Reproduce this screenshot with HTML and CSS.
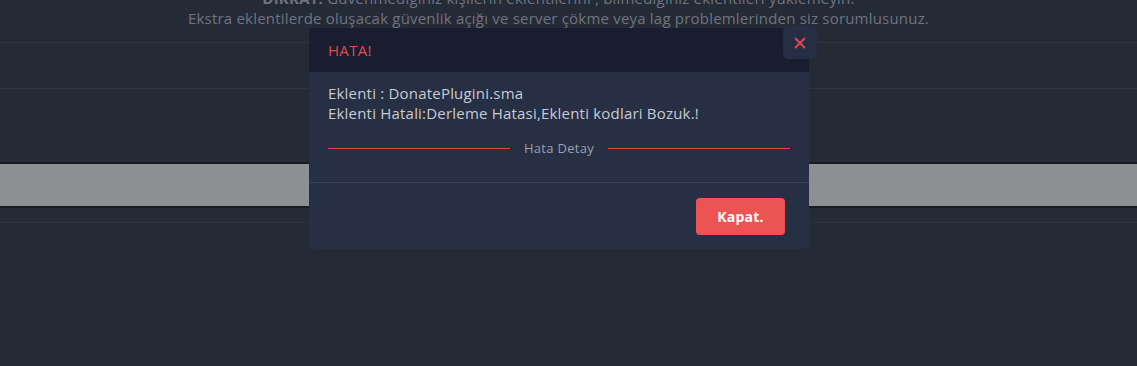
FILE: index.html
```html
<!DOCTYPE html>
<html lang="tr">
<head>
<meta charset="utf-8">
<link rel="stylesheet" href="styles.css">
</head>
<body>
<div class="page">
  <div class="notice">
    <p><b>DİKKAT:</b> Güvenmediğiniz kişilerin eklentilerini , bilmediğiniz eklentileri yüklemeyin.</p>
    <p>Ekstra eklentilerde oluşacak güvenlik açığı ve server çökme veya lag problemlerinden siz sorumlusunuz.</p>
  </div>
  <div class="row row-a"></div>
  <div class="row row-b"></div>
  <div class="band"></div>
  <div class="row row-c"></div>
</div>

<div class="modal">
  <div class="modal-header">
    <span class="modal-title">HATA!</span>
  </div>
  <button class="modal-close" aria-label="Kapat">
    <svg width="12" height="12" viewBox="0 0 12 12"><path d="M1.5 1.5L10.5 10.5M10.5 1.5L1.5 10.5" stroke="#e5484d" stroke-width="1.8" stroke-linecap="round"/></svg>
  </button>
  <div class="modal-body">
    <p>Eklenti : DonatePlugini.sma</p>
    <p>Eklenti Hatali:Derleme Hatasi,Eklenti kodlari Bozuk.!</p>
    <div class="divider"><span class="divider-line"></span><span class="divider-text">Hata Detay</span><span class="divider-line"></span></div>
  </div>
  <div class="modal-footer">
    <button class="btn-close">Kapat.</button>
  </div>
</div>
</body>
</html>
```
FILE: styles.css
```css
* { box-sizing: border-box; }
html, body { margin: 0; padding: 0; }
body {
  background: #252a37;
  font-family: "Open Sans", "Noto Sans", sans-serif;
  width: 1137px;
  height: 366px;
  overflow: hidden;
  position: relative;
}
.page { display: flex; flex-direction: column; }
.notice {
  margin-top: -12px;
  text-align: center;
  color: #6f7480;
  font-size: 15px;
  line-height: 20px;
  letter-spacing: 0.2px;
  padding-right: 20px;
}
.notice p { margin: 0; }
.notice b { color: #6f7480; }
.row-a { height: 15px; border-bottom: 1px solid #2f3542; }
.row-b { height: 46px; border-bottom: 1px solid #2f3542; }
.band {
  margin-top: 73px;
  height: 46px;
  background: #8c9093;
  border-top: 2px solid #171b22;
  border-bottom: 2px solid #171b22;
}
.row-c { height: 15px; border-bottom: 1px solid #2b313e; }

.modal {
  position: absolute;
  left: 309px;
  top: 28px;
  width: 500px;
  background: #272f45;
  border-radius: 0 0 5px 5px;
  display: flex;
  flex-direction: column;
}
.modal-header {
  height: 44px;
  background: #181d30;
  display: flex;
  align-items: center;
  padding: 0 19px;
}
.modal-title { color: #e5484d; font-size: 15px; letter-spacing: 0.3px; }
.modal-close {
  position: absolute;
  right: -8px;
  top: -2px;
  width: 34px;
  height: 33px;
  border: 0;
  border-radius: 6px;
  background: #262e45;
  display: flex;
  align-items: center;
  justify-content: center;
  padding: 0;
}
.modal-body {
  padding: 11px 19px 0 19px;
  color: #c8cbd2;
  font-size: 15px;
  line-height: 20px;
  letter-spacing: 0.2px;
  border-bottom: 1px solid #3a4153;
  height: 111px;
}
.modal-body p { margin: 0; }
.divider {
  display: flex;
  align-items: center;
  gap: 14px;
  margin-top: 15px;
  color: #9ba0ab;
  font-size: 13px;
  letter-spacing: 0.3px;
}
.divider-line {
  flex: 1;
  border-top: 1px solid #e3474c;
}
.modal-footer {
  display: flex;
  justify-content: flex-end;
  padding: 15px 24px 14px;
}
.btn-close {
  width: 89px;
  height: 37px;
  border: 0;
  border-radius: 4px;
  background: #ec5453;
  color: #fff;
  font-family: inherit;
  font-weight: 700;
  font-size: 14px;
  letter-spacing: 0.2px;
}
```
